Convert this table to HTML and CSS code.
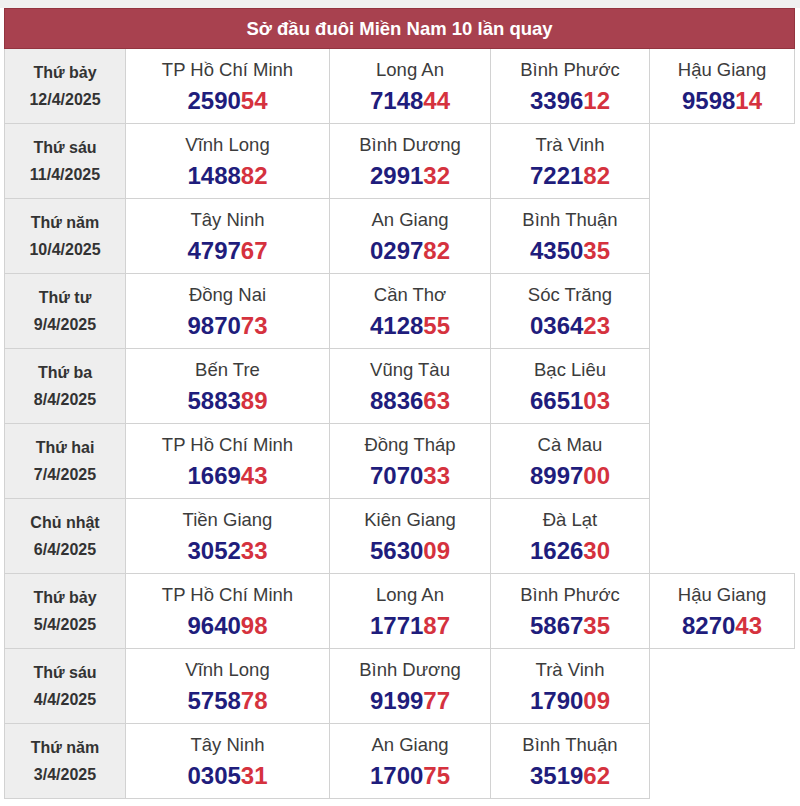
FILE: index.html
```html
<!DOCTYPE html>
<html lang="vi">
<head>
<meta charset="utf-8">
<title>Sở đầu đuôi Miền Nam 10 lần quay</title>
<link rel="stylesheet" href="styles.css">
</head>
<body>
<div class="page">
<table class="kq">
<colgroup>
<col class="c-date"><col class="c-1"><col class="c-2"><col class="c-3"><col class="c-4">
</colgroup>
<thead>
<tr><th colspan="5" class="title">Sở đầu đuôi Miền Nam 10 lần quay</th></tr>
</thead>
<tbody>
<tr>
<td class="date"><span class="day">Thứ bảy</span><span class="dt">12/4/2025</span></td>
<td><span class="name">TP Hồ Chí Minh</span><span class="num">2590<em>54</em></span></td>
<td><span class="name">Long An</span><span class="num">7148<em>44</em></span></td>
<td><span class="name">Bình Phước</span><span class="num">3396<em>12</em></span></td>
<td><span class="name">Hậu Giang</span><span class="num">9598<em>14</em></span></td>
</tr>
<tr>
<td class="date"><span class="day">Thứ sáu</span><span class="dt">11/4/2025</span></td>
<td><span class="name">Vĩnh Long</span><span class="num">1488<em>82</em></span></td>
<td><span class="name">Bình Dương</span><span class="num">2991<em>32</em></span></td>
<td><span class="name">Trà Vinh</span><span class="num">7221<em>82</em></span></td>
</tr>
<tr>
<td class="date"><span class="day">Thứ năm</span><span class="dt">10/4/2025</span></td>
<td><span class="name">Tây Ninh</span><span class="num">4797<em>67</em></span></td>
<td><span class="name">An Giang</span><span class="num">0297<em>82</em></span></td>
<td><span class="name">Bình Thuận</span><span class="num">4350<em>35</em></span></td>
</tr>
<tr>
<td class="date"><span class="day">Thứ tư</span><span class="dt">9/4/2025</span></td>
<td><span class="name">Đồng Nai</span><span class="num">9870<em>73</em></span></td>
<td><span class="name">Cần Thơ</span><span class="num">4128<em>55</em></span></td>
<td><span class="name">Sóc Trăng</span><span class="num">0364<em>23</em></span></td>
</tr>
<tr>
<td class="date"><span class="day">Thứ ba</span><span class="dt">8/4/2025</span></td>
<td><span class="name">Bến Tre</span><span class="num">5883<em>89</em></span></td>
<td><span class="name">Vũng Tàu</span><span class="num">8836<em>63</em></span></td>
<td><span class="name">Bạc Liêu</span><span class="num">6651<em>03</em></span></td>
</tr>
<tr>
<td class="date"><span class="day">Thứ hai</span><span class="dt">7/4/2025</span></td>
<td><span class="name">TP Hồ Chí Minh</span><span class="num">1669<em>43</em></span></td>
<td><span class="name">Đồng Tháp</span><span class="num">7070<em>33</em></span></td>
<td><span class="name">Cà Mau</span><span class="num">8997<em>00</em></span></td>
</tr>
<tr>
<td class="date"><span class="day">Chủ nhật</span><span class="dt">6/4/2025</span></td>
<td><span class="name">Tiền Giang</span><span class="num">3052<em>33</em></span></td>
<td><span class="name">Kiên Giang</span><span class="num">5630<em>09</em></span></td>
<td><span class="name">Đà Lạt</span><span class="num">1626<em>30</em></span></td>
</tr>
<tr>
<td class="date"><span class="day">Thứ bảy</span><span class="dt">5/4/2025</span></td>
<td><span class="name">TP Hồ Chí Minh</span><span class="num">9640<em>98</em></span></td>
<td><span class="name">Long An</span><span class="num">1771<em>87</em></span></td>
<td><span class="name">Bình Phước</span><span class="num">5867<em>35</em></span></td>
<td><span class="name">Hậu Giang</span><span class="num">8270<em>43</em></span></td>
</tr>
<tr>
<td class="date"><span class="day">Thứ sáu</span><span class="dt">4/4/2025</span></td>
<td><span class="name">Vĩnh Long</span><span class="num">5758<em>78</em></span></td>
<td><span class="name">Bình Dương</span><span class="num">9199<em>77</em></span></td>
<td><span class="name">Trà Vinh</span><span class="num">1790<em>09</em></span></td>
</tr>
<tr>
<td class="date"><span class="day">Thứ năm</span><span class="dt">3/4/2025</span></td>
<td><span class="name">Tây Ninh</span><span class="num">0305<em>31</em></span></td>
<td><span class="name">An Giang</span><span class="num">1700<em>75</em></span></td>
<td><span class="name">Bình Thuận</span><span class="num">3519<em>62</em></span></td>
</tr>
</tbody>
</table>
</div>
</body>
</html>
```

FILE: styles.css
```css
html, body {
  margin: 0;
  padding: 0;
  background: #ffffff;
}

.page {
  border-top: 8px solid #f0f0f0;
  padding: 0 6px 0 4px;
  font-family: "Liberation Sans", Arial, sans-serif;
}

.kq {
  width: 790px;
  border-collapse: collapse;
  table-layout: fixed;
}

.c-date { width: 121px; }
.c-1 { width: 204px; }
.c-2 { width: 161px; }
.c-3 { width: 159px; }
.c-4 { width: 145px; }

.title {
  height: 39px;
  padding: 0;
  background: #a8414f;
  border: 1px solid #93343f;
  color: #ffffff;
  font-size: 18.5px;
  font-weight: bold;
  text-align: center;
  vertical-align: middle;
}

.kq td {
  height: 74px;
  padding: 0;
  border: 1px solid #d2d2d2;
  text-align: center;
  vertical-align: middle;
  background: #ffffff;
}

.kq td.date {
  background: #eeeeee;
}

.day, .dt {
  display: block;
  font-size: 16px;
  font-weight: bold;
  line-height: 27px;
  color: #333333;
}

.name {
  display: block;
  font-size: 18.5px;
  line-height: 30px;
  color: #3c3c3c;
}

.num {
  display: block;
  font-size: 24px;
  font-weight: bold;
  line-height: 32px;
  color: #1f1d7c;
}

.num em {
  font-style: normal;
  color: #d5323e;
}
```
